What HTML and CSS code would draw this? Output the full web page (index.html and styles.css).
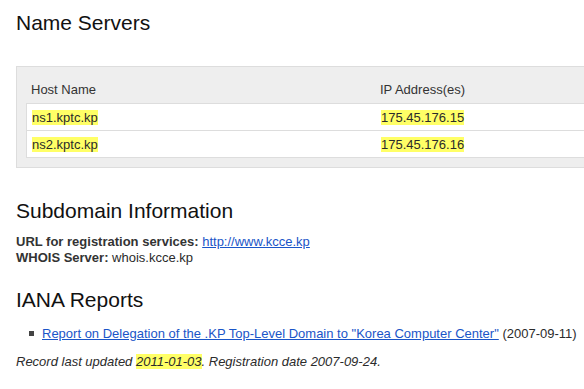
FILE: index.html
```html
<!DOCTYPE html>
<html>
<head>
<meta charset="utf-8">
<link rel="stylesheet" href="styles.css">
</head>
<body>
<h1 class="title">Name Servers</h1>
<div class="ns-box">
  <div class="ns-head">
    <div class="cell">Host Name</div>
    <div class="cell">IP Address(es)</div>
  </div>
  <div class="ns-body">
    <div class="ns-row">
      <div class="cell"><span class="hl">ns1.kptc.kp</span></div>
      <div class="cell"><span class="hl">175.45.176.15</span></div>
    </div>
    <div class="ns-row">
      <div class="cell"><span class="hl">ns2.kptc.kp</span></div>
      <div class="cell"><span class="hl">175.45.176.16</span></div>
    </div>
  </div>
</div>

<h2 class="section sub">Subdomain Information</h2>
<p class="info">
  <b>URL for registration services:</b> <a href="#">http://www.kcce.kp</a><br>
  <b>WHOIS Server:</b> whois.kcce.kp
</p>

<h2 class="section iana">IANA Reports</h2>
<ul class="reports">
  <li><a href="#">Report on Delegation of the .KP Top-Level Domain to "Korea Computer Center"</a> (2007-09-11)</li>
</ul>
<p class="record">Record last updated <span class="hl">2011-01-03</span>. Registration date 2007-09-24.</p>
</body>
</html>
```

FILE: styles.css
```css
html, body {
  margin: 0;
  overflow: hidden;
  background: #fff;
}
body {
  padding: 11px 0 0 16px;
  font-family: "Liberation Sans", Arial, sans-serif;
  font-size: 13px;
  line-height: 16px;
  color: #2b2b2b;
}
.title, .section {
  margin: 0;
  font-size: 21px;
  line-height: 24px;
  font-weight: normal;
  color: #111;
}
.ns-box {
  margin-top: 31px;
  background: #eeeeee;
  border: 1px solid #dddddd;
  border-right: none;
  padding: 0 0 9px 9px;
}
.ns-head, .ns-row {
  display: grid;
  grid-template-columns: 349px 1fr;
}
.ns-head .cell {
  padding: 15px 5px 6px;
  line-height: 15px;
  color: #333;
}
.ns-body {
  background: #fff;
  border: 1px solid #dddddd;
  border-right: none;
}
.ns-row + .ns-row {
  border-top: 1px solid #dddddd;
}
.ns-row .cell {
  padding: 6px 5px 5px;
  line-height: 15px;
  color: #2b2b2b;
}
.hl {
  background: #ffff66;
}
.sub {
  margin-top: 31px;
}
.info {
  margin: 11px 0 0;
}
.info b {
  color: #333;
}
a {
  color: #1a55c8;
  text-decoration: underline;
}
.iana {
  margin-top: 22px;
}
.reports {
  list-style: none;
  margin: 14px 0 0;
  padding: 0 0 0 26px;
}
.reports li::before {
  content: "";
  display: inline-block;
  width: 5px;
  height: 5px;
  background: #444;
  margin-left: -13px;
  margin-right: 8px;
  vertical-align: 2px;
}
.record {
  margin: 12px 0 0;
  font-style: italic;
}
```
